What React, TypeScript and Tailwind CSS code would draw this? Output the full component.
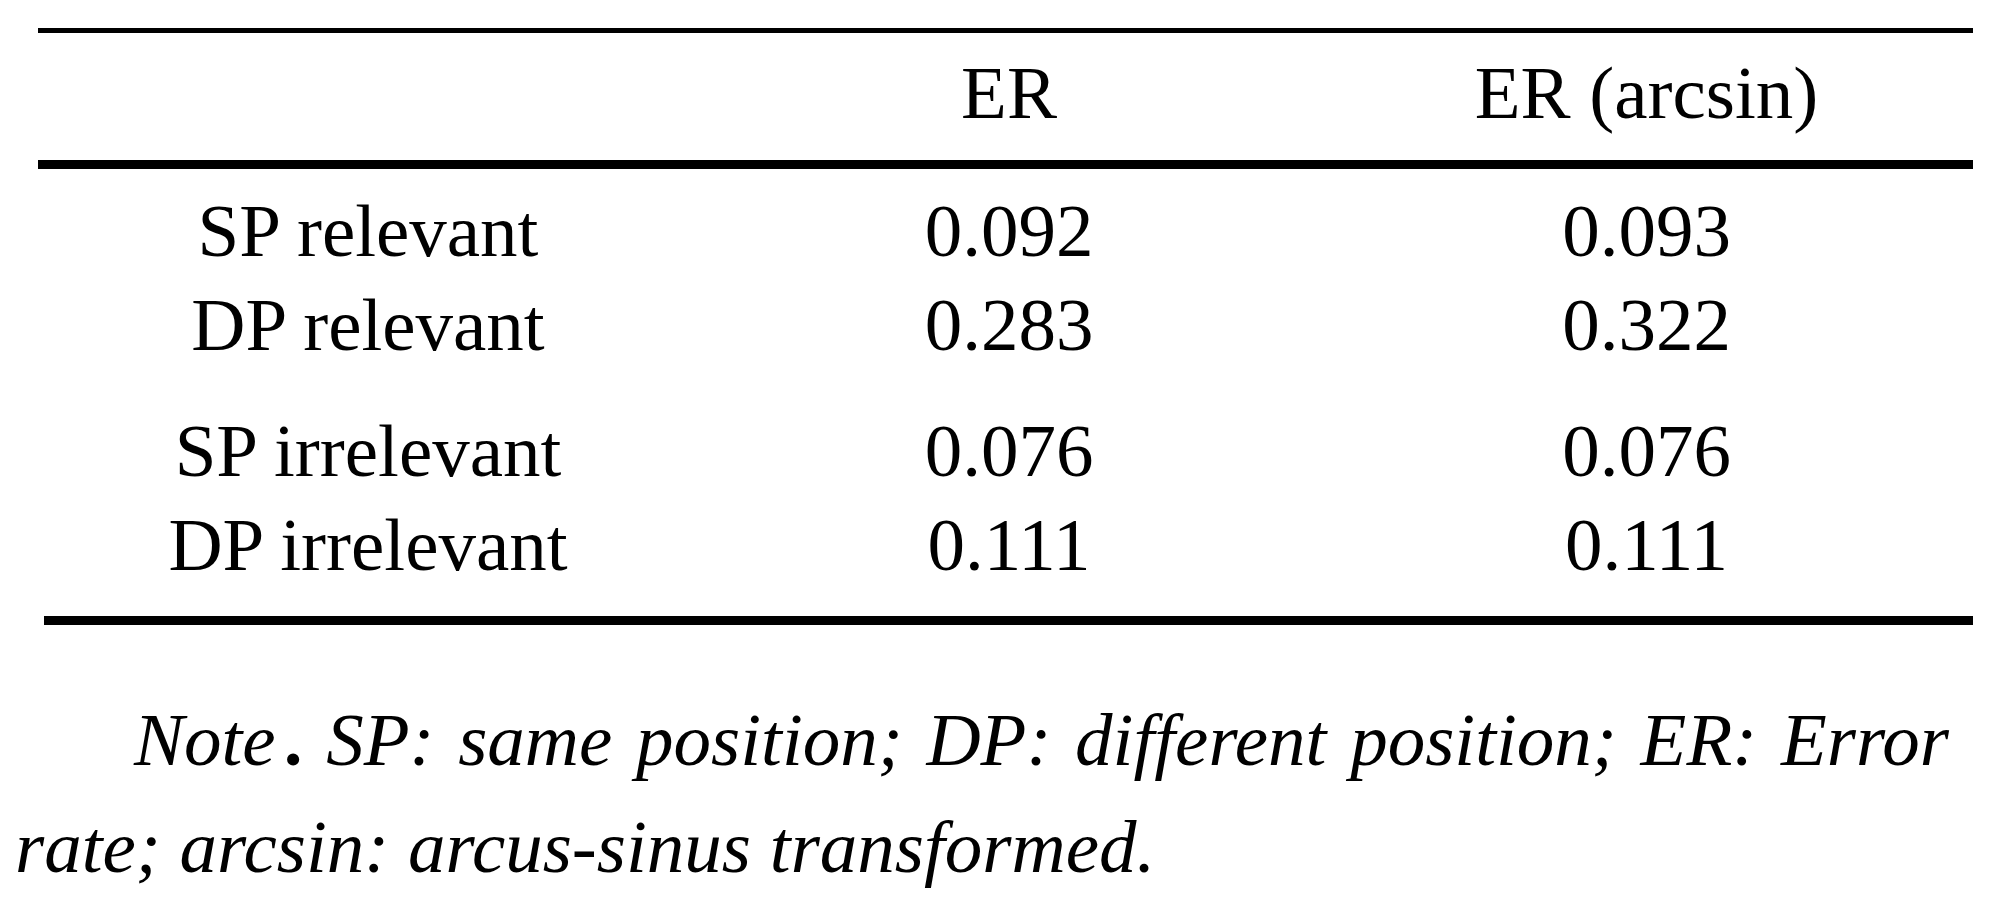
const rows = [
	{ label: "SP relevant", er: "0.092", arcsin: "0.093" },
	{ label: "DP relevant", er: "0.283", arcsin: "0.322" },
	{ label: "SP irrelevant", er: "0.076", arcsin: "0.076" },
	{ label: "DP irrelevant", er: "0.111", arcsin: "0.111" },
]

const serif = { fontFamily: '"Liberation Serif", "Times New Roman", serif' }

const Row = ({ label, er, arcsin }: { label: string, er: string, arcsin: string }) => (
	<div className="grid grid-cols-[660px_622px_1fr] text-center leading-[94px]">
		<div>{label}</div>
		<div>{er}</div>
		<div>{arcsin}</div>
	</div>
)

export default function App() {
	return (
		<div className="w-[1996px] h-[914px] bg-white text-black overflow-hidden" style={serif}>
			<div className="ml-[38px] w-[1935px] pt-[28px] text-[75px]">
				{/* header */}
				<div className="border-t-[5px] border-black">
					<div className="grid grid-cols-[660px_622px_1fr] text-center leading-[75px] pt-[22px] pb-[30px]">
						<div></div>
						<div>ER</div>
						<div>ER (arcsin)</div>
					</div>
				</div>
				<div className="border-t-[9px] border-black pt-[15px] pb-[24px]">
					<Row {...rows[0]} />
					<Row {...rows[1]} />
					<div className="h-[32px]" />
					<Row {...rows[2]} />
					<Row {...rows[3]} />
				</div>
				<div className="ml-[6px] border-t-[9px] border-black" />
			</div>

			{/* note */}
			<p className="ml-[15px] w-[1934px] mt-[61px] text-[75px] leading-[107px] italic text-justify indent-[119px]">
				Note<span className="not-italic font-bold ml-[8px]">.</span> SP: same position; DP: different position; ER: Error rate; arcsin: arcus-sinus transformed.
			</p>
		</div>
	)
}
